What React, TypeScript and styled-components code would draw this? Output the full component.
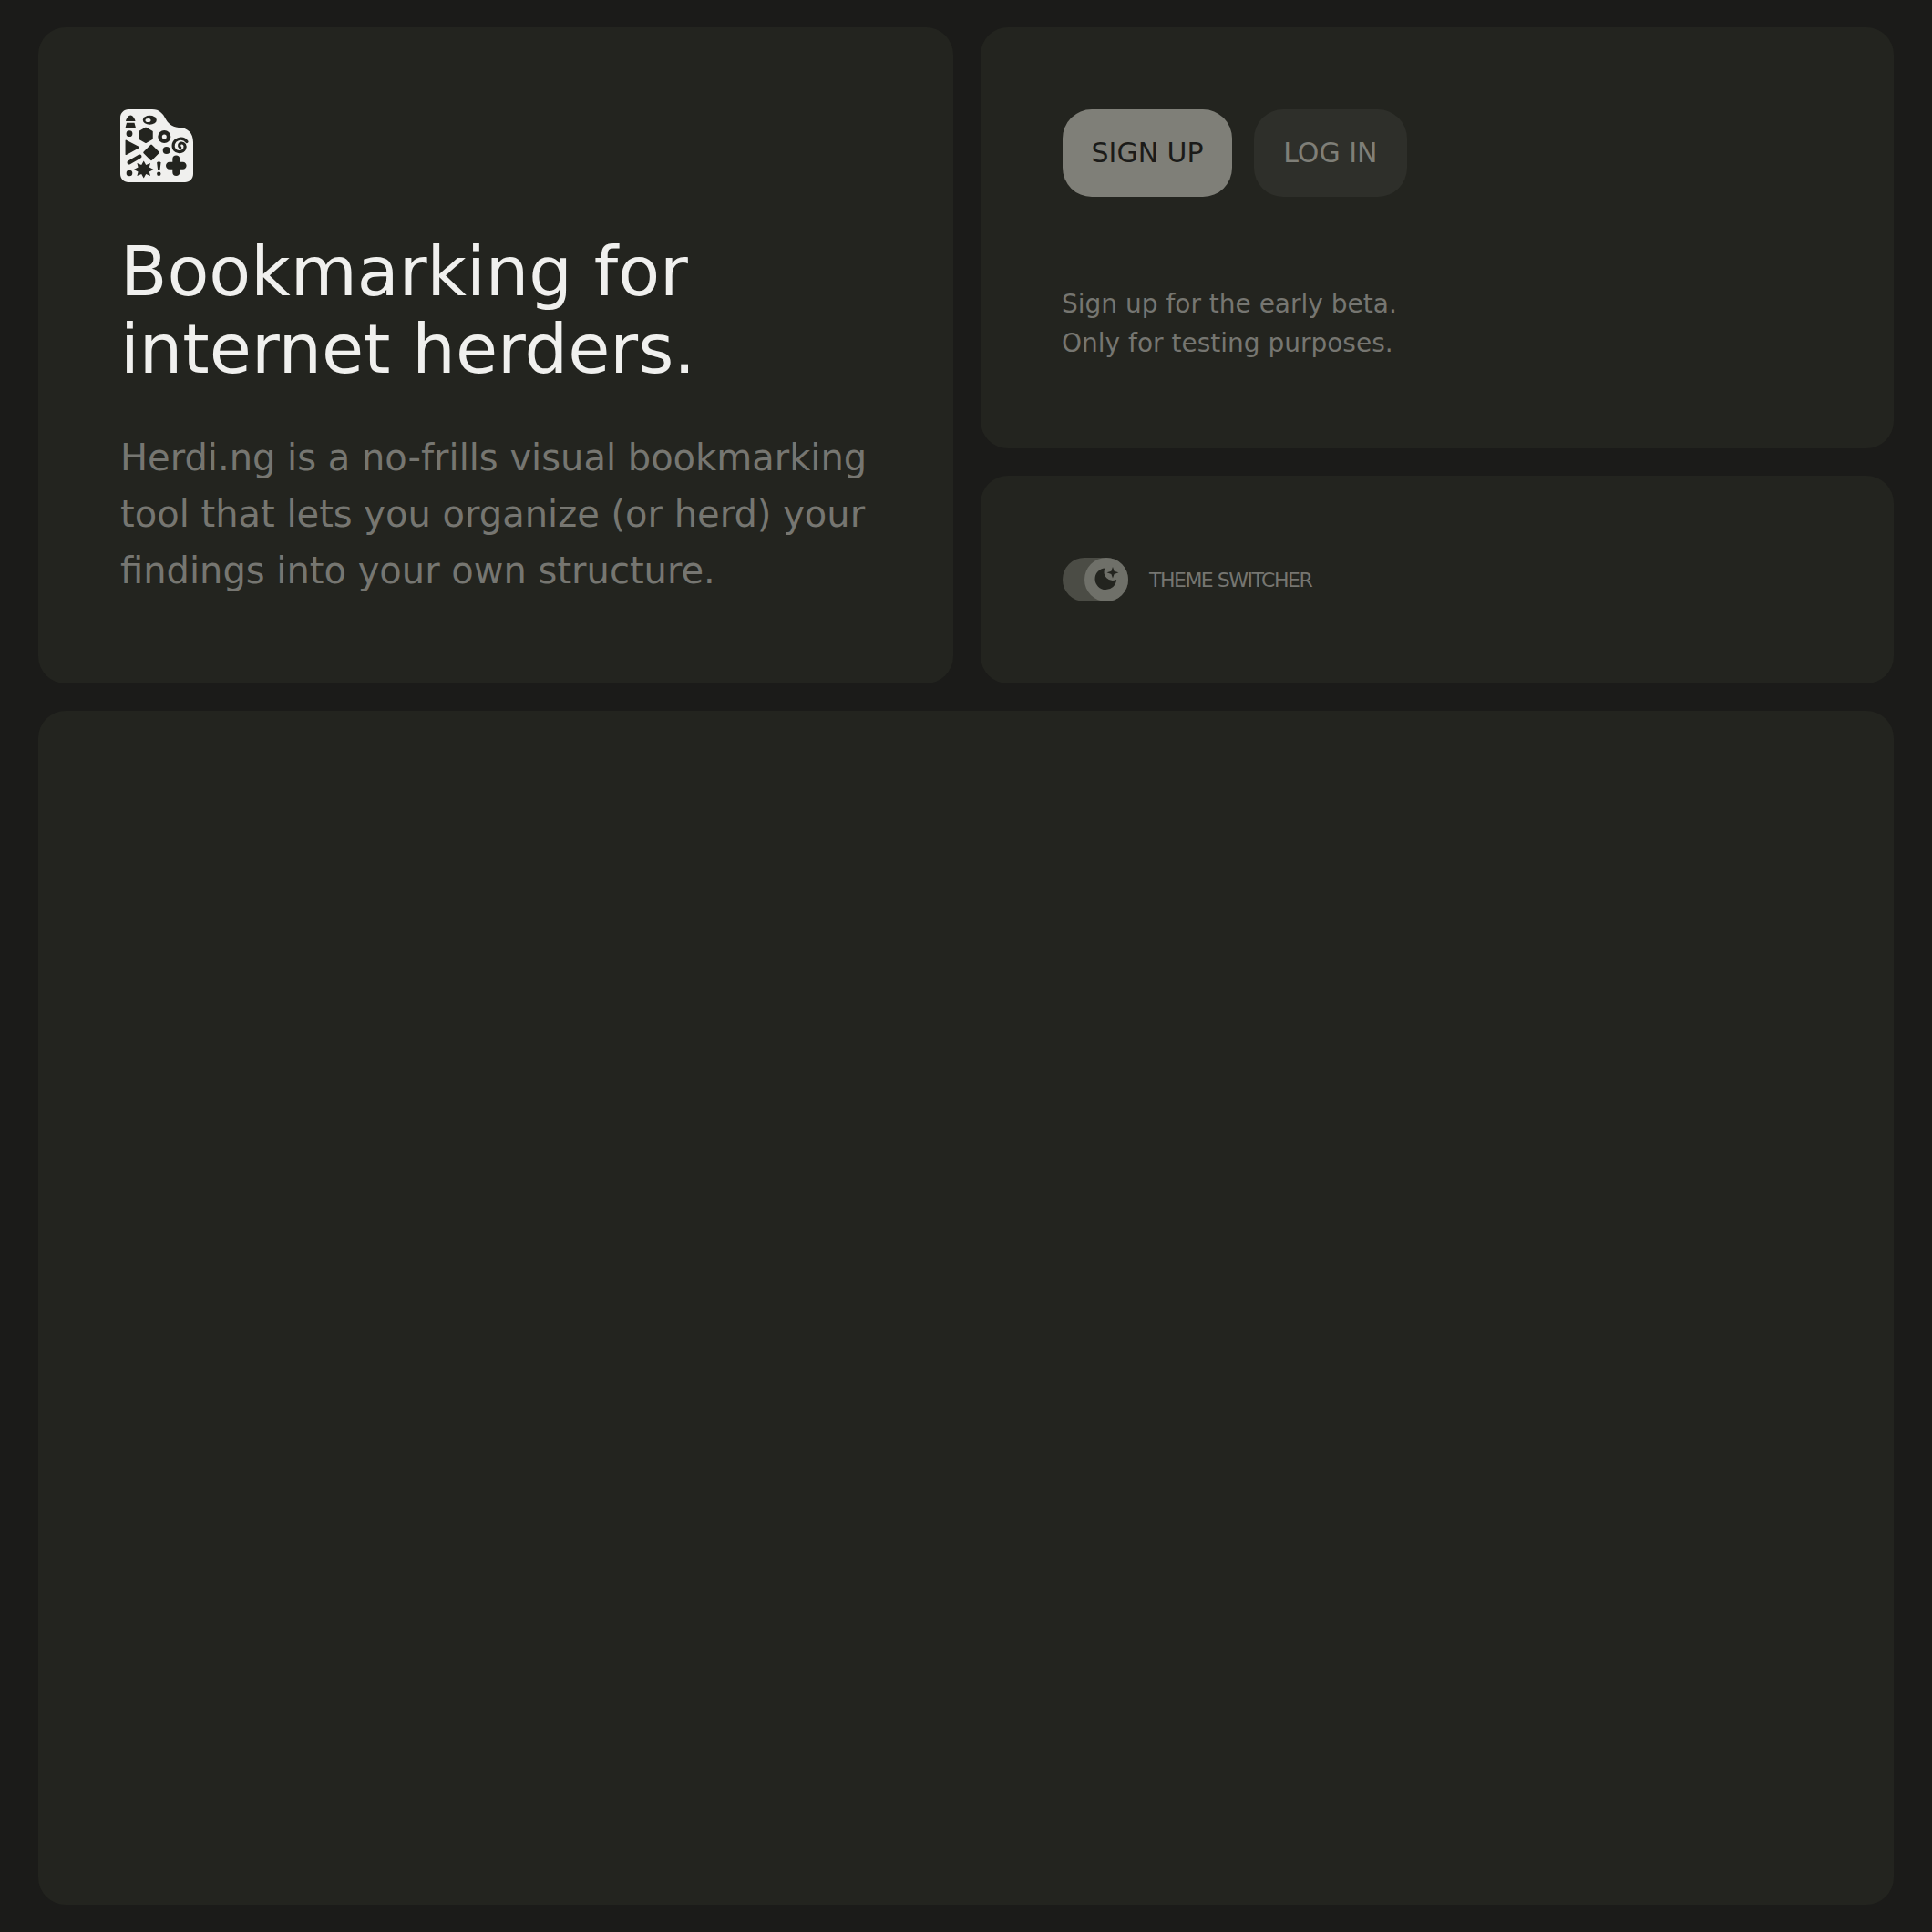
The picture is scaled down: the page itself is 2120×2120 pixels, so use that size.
import React from 'react';
import styled, { createGlobalStyle } from 'styled-components';

const GlobalStyle = createGlobalStyle`
  html, body {
    margin: 0;
    background: #1b1b19;
  }
  * {
    box-sizing: border-box;
  }
`;

const Page = styled.main`
  width: 2120px;
  height: 2120px;
  padding: 30px 42px;
  display: grid;
  grid-template-columns: 1004px 1002px;
  grid-template-rows: 462px 228px 1310px;
  gap: 30px;
  font-family: 'DejaVu Sans', sans-serif;
`;

const Card = styled.section`
  background: #23241f;
  border-radius: 30px;
  padding: 90px;
`;

const IntroCard = styled(Card)`
  grid-row: 1 / span 2;
`;

const AuthCard = styled(Card)`
  padding-bottom: 0;
`;

const ThemeCard = styled(Card)`
  display: flex;
  align-items: center;
  gap: 23px;
  padding-top: 0;
  padding-bottom: 0;
`;

const WideCard = styled(Card)`
  grid-column: 1 / span 2;
`;

const Logo = styled.svg`
  display: block;
  width: 80px;
  height: 80px;
`;

const Heading = styled.h1`
  margin: 56px 0 0;
  font-size: 75px;
  line-height: 85px;
  font-weight: 400;
  color: #f0f0ee;
`;

const Lead = styled.p`
  margin: 45px 0 0;
  font-size: 40px;
  line-height: 62px;
  color: #767671;
`;

const Actions = styled.div`
  display: flex;
  gap: 24px;
`;

const Button = styled.button<{ $primary?: boolean }>`
  height: 96px;
  padding: 0 ${p => (p.$primary ? '31.5px' : '32px')} 2px;
  border: 0;
  border-radius: 32px;
  font-family: inherit;
  font-size: 30px;
  background: ${p => (p.$primary ? '#7f7f78' : '#2e2f2a')};
  color: ${p => (p.$primary ? '#1b1b19' : '#7f7f78')};
`;

const Note = styled.p`
  margin: 96px 0 0 -1px;
  font-size: 28px;
  line-height: 43px;
  color: #767671;
`;

const Toggle = styled.div`
  position: relative;
  width: 72px;
  height: 48px;
  border-radius: 24px;
  background: #4b4c45;
`;

const Knob = styled.div`
  position: absolute;
  top: 0;
  right: 0;
  width: 48px;
  height: 48px;
  border-radius: 50%;
  background: #6f7069;
  display: flex;
  align-items: center;
  justify-content: center;
`;

const ToggleLabel = styled.span`
  font-size: 22px;
  letter-spacing: -1.5px;
  color: #767671;
`;

const HerdLogo = () => (
  <Logo viewBox="0 0 80 80" aria-label="Herdi.ng logo">
    <path
      d="M9 0H35C43 0 47 5 49.500 10C52 15 56 19 64 20C74 20 80 26 80 36V71C80 76 76 80 71 80H9C4 80 0 76 0 71V9C0 4 4 0 9 0Z"
      fill="#f0f0ee"
    />
    <g fill="#23241f">
      <path d="M11.300 6.500C13.500 6.500 16 10 16.500 13H6C6.500 10 9 6.500 11.300 6.500Z" />
      <path d="M7 14.800H15.500L17 20.500H5.500Z" />
      <ellipse cx="32.300" cy="11.700" rx="7.500" ry="5" />
      <circle cx="10" cy="26.700" r="3.400" />
      <path d="M28 20.300L35 24.300V32.300L28 36.300L21 32.300V24.300Z" stroke="#23241f" strokeWidth="1.500" strokeLinejoin="round" />
      <circle cx="48.300" cy="30" r="7" />
      <path d="M6.300 34.300L20.300 41.700L6.300 49.300Z" stroke="#23241f" strokeWidth="1.500" strokeLinejoin="round" />
      <path d="M34 39.800L41.500 47.300L34 54.800L26.500 47.300Z" stroke="#23241f" strokeWidth="2.500" strokeLinejoin="round" />
      <circle cx="50.700" cy="45" r="4" />
      <path d="M25.700 56.500L28.200 61L33 59L31.800 63.500L36.500 66L31.800 68.500L33 73L28.200 71L25.700 75.500L23.200 71L18.400 73L19.600 68.500L14.900 66L19.600 63.500L18.400 59L23.200 61Z" />
      <path d="M40.100 58.500C40.100 57 44.500 57 44.500 58.500L43.500 66.500H41.100Z" />
      <circle cx="42.300" cy="70.700" r="2.200" />
      <circle cx="10" cy="70" r="3.300" />
      <path d="M57.300 54.400C57.300 52 59 50.400 61.300 50.400C63.600 50.400 65.300 52 65.300 54.400V57.700H68.600C71 57.700 72.600 59.400 72.600 61.700C72.600 64 71 65.700 68.600 65.700H65.300V69C65.300 71.400 63.600 73 61.300 73C59 73 57.300 71.400 57.300 69V65.700H54C51.600 65.700 50 64 50 61.700C50 59.400 51.600 57.700 54 57.700H57.300Z" />
    </g>
    <path d="M9.700 58.300L21.300 51.700" stroke="#23241f" strokeWidth="4.400" strokeLinecap="round" />
    <ellipse cx="30.500" cy="12" rx="3" ry="2" fill="#f0f0ee" />
    <circle cx="48.300" cy="30" r="2.500" fill="#f0f0ee" />
    <path
      d="M65.700 42C63.800 40.500 64.500 37.200 67 37C70.200 36.800 72 40 70.600 43.200C68.500 47.300 62.300 47.800 59.500 44.300C56.800 40.800 58 34.300 63.500 32.700C67 31.700 71 32.700 73 35.500"
      fill="none"
      stroke="#23241f"
      strokeWidth="3.200"
      strokeLinecap="round"
    />
  </Logo>
);

const MoonIcon = () => (
  <svg width="28" height="28" viewBox="0 0 28 28">
    <path
      d="M12.500 1.500A11.800 11.800 0 1 0 25.100 14A9.400 9.400 0 0 1 12.500 1.500Z"
      fill="#23241f"
    />
    <path d="M21 0L22.600 4.700L27.500 6.300L22.600 7.900L21 12.600L19.400 7.900L14.500 6.300L19.400 4.700Z" fill="#23241f" />
  </svg>
);

export default function App() {
  return (
    <>
      <GlobalStyle />
      <Page>
        <IntroCard>
          <HerdLogo />
          <Heading>
            Bookmarking for
            <br />
            internet herders.
          </Heading>
          <Lead>
            Herdi.ng is a no-frills visual bookmarking
            <br />
            tool that lets you organize (or herd) your
            <br />
            findings into your own structure.
          </Lead>
        </IntroCard>
        <AuthCard>
          <Actions>
            <Button $primary>SIGN UP</Button>
            <Button>LOG IN</Button>
          </Actions>
          <Note>
            Sign up for the early beta.
            <br />
            Only for testing purposes.
          </Note>
        </AuthCard>
        <ThemeCard>
          <Toggle>
            <Knob>
              <MoonIcon />
            </Knob>
          </Toggle>
          <ToggleLabel>THEME SWITCHER</ToggleLabel>
        </ThemeCard>
        <WideCard />
      </Page>
    </>
  );
}
